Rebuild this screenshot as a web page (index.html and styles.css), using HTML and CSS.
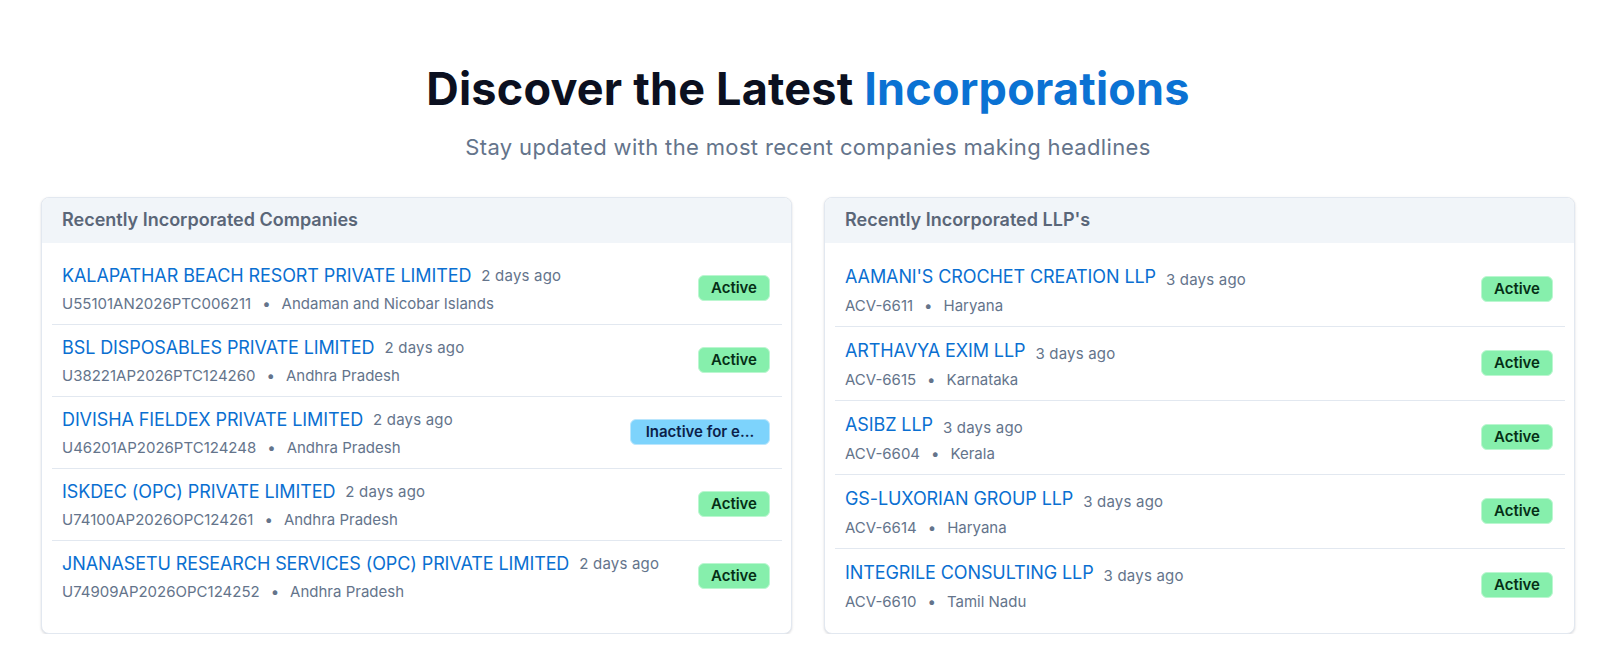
FILE: index.html
```html
<!DOCTYPE html>
<html lang="en">
<head>
<meta charset="utf-8">
<title>Discover the Latest Incorporations</title>
<link rel="stylesheet" href="styles.css">
</head>
<body>
<section class="section">
  <h1 class="title">Discover the Latest <span class="accent">Incorporations</span></h1>
  <p class="subtitle">Stay updated with the most recent companies making headlines</p>
  <div class="grid">
    <div class="card">
      <div class="card-head">Recently Incorporated Companies</div>
      <ul class="list">
        <li class="row">
          <div class="info">
            <div class="line"><a class="name" href="#">KALAPATHAR BEACH RESORT PRIVATE LIMITED</a><span class="date">2 days ago</span></div>
            <div class="meta">U55101AN2026PTC006211<span class="dot">•</span>Andaman and Nicobar Islands</div>
          </div>
          <span class="badge active">Active</span>
        </li>
        <li class="row">
          <div class="info">
            <div class="line"><a class="name" href="#">BSL DISPOSABLES PRIVATE LIMITED</a><span class="date">2 days ago</span></div>
            <div class="meta">U38221AP2026PTC124260<span class="dot">•</span>Andhra Pradesh</div>
          </div>
          <span class="badge active">Active</span>
        </li>
        <li class="row">
          <div class="info">
            <div class="line"><a class="name" href="#">DIVISHA FIELDEX PRIVATE LIMITED</a><span class="date">2 days ago</span></div>
            <div class="meta">U46201AP2026PTC124248<span class="dot">•</span>Andhra Pradesh</div>
          </div>
          <span class="badge inactive">Inactive for e...</span>
        </li>
        <li class="row">
          <div class="info">
            <div class="line"><a class="name" href="#">ISKDEC (OPC) PRIVATE LIMITED</a><span class="date">2 days ago</span></div>
            <div class="meta">U74100AP2026OPC124261<span class="dot">•</span>Andhra Pradesh</div>
          </div>
          <span class="badge active">Active</span>
        </li>
        <li class="row">
          <div class="info">
            <div class="line"><a class="name" href="#">JNANASETU RESEARCH SERVICES (OPC) PRIVATE LIMITED</a><span class="date">2 days ago</span></div>
            <div class="meta">U74909AP2026OPC124252<span class="dot">•</span>Andhra Pradesh</div>
          </div>
          <span class="badge active">Active</span>
        </li>
      </ul>
    </div>
    <div class="card llp">
      <div class="card-head">Recently Incorporated LLP's</div>
      <ul class="list">
        <li class="row">
          <div class="info">
            <div class="line"><a class="name" href="#">AAMANI'S CROCHET CREATION LLP</a><span class="date">3 days ago</span></div>
            <div class="meta">ACV-6611<span class="dot">•</span>Haryana</div>
          </div>
          <span class="badge active">Active</span>
        </li>
        <li class="row">
          <div class="info">
            <div class="line"><a class="name" href="#">ARTHAVYA EXIM LLP</a><span class="date">3 days ago</span></div>
            <div class="meta">ACV-6615<span class="dot">•</span>Karnataka</div>
          </div>
          <span class="badge active">Active</span>
        </li>
        <li class="row">
          <div class="info">
            <div class="line"><a class="name" href="#">ASIBZ LLP</a><span class="date">3 days ago</span></div>
            <div class="meta">ACV-6604<span class="dot">•</span>Kerala</div>
          </div>
          <span class="badge active">Active</span>
        </li>
        <li class="row">
          <div class="info">
            <div class="line"><a class="name" href="#">GS-LUXORIAN GROUP LLP</a><span class="date">3 days ago</span></div>
            <div class="meta">ACV-6614<span class="dot">•</span>Haryana</div>
          </div>
          <span class="badge active">Active</span>
        </li>
        <li class="row">
          <div class="info">
            <div class="line"><a class="name" href="#">INTEGRILE CONSULTING LLP</a><span class="date">3 days ago</span></div>
            <div class="meta">ACV-6610<span class="dot">•</span>Tamil Nadu</div>
          </div>
          <span class="badge active">Active</span>
        </li>
      </ul>
    </div>
  </div>
</section>
</body>
</html>
```

FILE: styles.css
```css
* { box-sizing: border-box; }

html, body {
  margin: 0;
  background: #ffffff;
}

body {
  font-family: Inter, "Noto Sans", "Liberation Sans", sans-serif;
  color: #0f172a;
}

.section {
  padding: 62px 25px 0 41px;
}

.title {
  margin: 0;
  text-align: center;
  font-size: 45px;
  line-height: 54px;
  font-weight: 700;
  letter-spacing: 0.2px;
  color: #0b1020;
}

.accent {
  color: #0b72d3;
}

.subtitle {
  margin: 15px 0 0;
  text-align: center;
  font-size: 22px;
  line-height: 32px;
  letter-spacing: 0.35px;
  color: #64748b;
}

.grid {
  margin-top: 34px;
  display: grid;
  grid-template-columns: 1fr 1fr;
  gap: 32px;
  align-items: stretch;
}

.card {
  border: 1px solid #e2e8f0;
  border-radius: 8px;
  background: #fff;
  box-shadow: 0 1px 3px rgba(15, 23, 42, 0.1), 0 1px 2px rgba(15, 23, 42, 0.06);
  overflow: hidden;
}

.card-head {
  background: #f1f5f9;
  padding: 10px 20px 11px;
  font-size: 18px;
  line-height: 24px;
  font-weight: 600;
  color: #5a6678;
}

.list {
  list-style: none;
  margin: 0;
  padding: 10px 9px 11px 10px;
}

.row {
  display: flex;
  align-items: center;
  justify-content: space-between;
  padding: 10px 12px 9px 10px;
  border-bottom: 1px solid #e2e8f0;
}

.row:last-child {
  border-bottom: none;
}

.info {
  display: flex;
  flex-direction: column;
  gap: 4px;
  min-width: 0;
}

.line {
  display: flex;
  align-items: center;
}

.name {
  font-size: 18px;
  line-height: 26px;
  letter-spacing: -0.1px;
  color: #0a6fd1;
  text-decoration: none;
  white-space: nowrap;
}

.date {
  margin-left: 10px;
  font-size: 15px;
  line-height: 22px;
  letter-spacing: 0.2px;
  color: #64748b;
  white-space: nowrap;
}

.llp .date {
  margin-top: 6px;
}

.meta {
  font-size: 15px;
  line-height: 22px;
  color: #64748b;
  white-space: nowrap;
}

.dot {
  margin: 0 11px;
  color: #64748b;
}

.badge {
  flex: none;
  height: 26px;
  margin-bottom: 3px;
  padding: 0 12px;
  border-radius: 6px;
  border: 1px solid transparent;
  font-size: 15px;
  line-height: 24px;
  font-weight: 600;
  white-space: nowrap;
  overflow: hidden;
  text-overflow: ellipsis;
}

.badge.active {
  background: #86efac;
  border-color: #bbf7d0;
  color: #052e16;
}

.badge.inactive {
  width: 140px;
  text-align: center;
  background: #7dd3fc;
  border-color: #bae6fd;
  color: #0c1f4a;
}
```
